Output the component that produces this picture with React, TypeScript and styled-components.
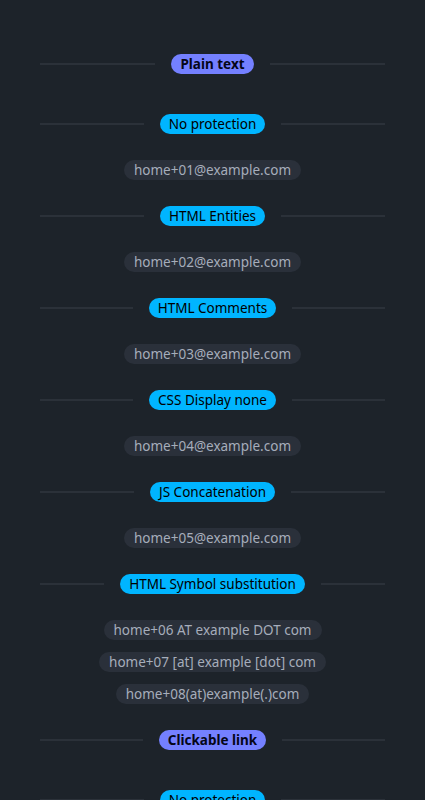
import styled, { createGlobalStyle } from "styled-components";

const GlobalStyle = createGlobalStyle`
  html, body {
    margin: 0;
    padding: 0;
    background-color: #1d232a;
  }
  body {
    font-family: "Noto Sans", "Open Sans", sans-serif;
    color: #a6adbb;
  }
`;

const Page = styled.main`
  padding: 54px 40px 40px;
  display: flex;
  flex-direction: column;
`;

const Divider = styled.div<{ $head?: boolean }>`
  display: flex;
  align-items: center;
  gap: 16px;
  height: 20px;
  margin-bottom: ${(p) => (p.$head ? "40px" : "26px")};

  &::before,
  &::after {
    content: "";
    flex: 1;
    height: 2px;
    background-color: #2b3139;
  }
`;

const Badge = styled.span<{ $head?: boolean }>`
  height: 20px;
  padding: 0 9px;
  border-radius: 10px;
  display: inline-flex;
  align-items: center;
  font-size: 13.5px;
  font-weight: ${(p) => (p.$head ? 700 : 400)};
  background-color: ${(p) => (p.$head ? "#7480ff" : "#00b5ff")};
  color: ${(p) => (p.$head ? "#050617" : "#000000")};
  white-space: nowrap;
`;

const List = styled.div`
  display: flex;
  flex-direction: column;
  align-items: center;
  gap: 12px;
  margin-bottom: 26px;
`;

const Email = styled.span`
  height: 20px;
  padding: 0 10px;
  border-radius: 10px;
  display: inline-flex;
  align-items: center;
  font-size: 13.5px;
  background-color: #2a303a;
  color: #a6adbb;
  white-space: nowrap;
`;

const Link = styled.a`
  color: #a6adbb;
  text-decoration: none;
`;

type Group = { title: string; items: string[] };

const plain: Group[] = [
  { title: "No protection", items: ["home+01@example.com"] },
  { title: "HTML Entities", items: ["home+02@example.com"] },
  { title: "HTML Comments", items: ["home+03@example.com"] },
  { title: "CSS Display none", items: ["home+04@example.com"] },
  { title: "JS Concatenation", items: ["home+05@example.com"] },
  {
    title: "HTML Symbol substitution",
    items: [
      "home+06 AT example DOT com",
      "home+07 [at] example [dot] com",
      "home+08(at)example(.)com",
    ],
  },
];

const links: Group[] = [
  { title: "No protection", items: ["home+11@example.com"] },
  { title: "HTML Entities", items: ["home+12@example.com"] },
];

function Section({ title, groups, link }: { title: string; groups: Group[]; link?: boolean }) {
  return (
    <section>
      <Divider $head>
        <Badge $head>{title}</Badge>
      </Divider>
      {groups.map((g) => (
        <div key={g.title}>
          <Divider>
            <Badge>{g.title}</Badge>
          </Divider>
          <List>
            {g.items.map((e) => (
              <Email key={e}>{link ? <Link href={`mailto:${e}`}>{e}</Link> : e}</Email>
            ))}
          </List>
        </div>
      ))}
    </section>
  );
}

export default function App() {
  return (
    <>
      <GlobalStyle />
      <Page>
        <Section title="Plain text" groups={plain} />
        <Section title="Clickable link" groups={links} link />
      </Page>
    </>
  );
}
